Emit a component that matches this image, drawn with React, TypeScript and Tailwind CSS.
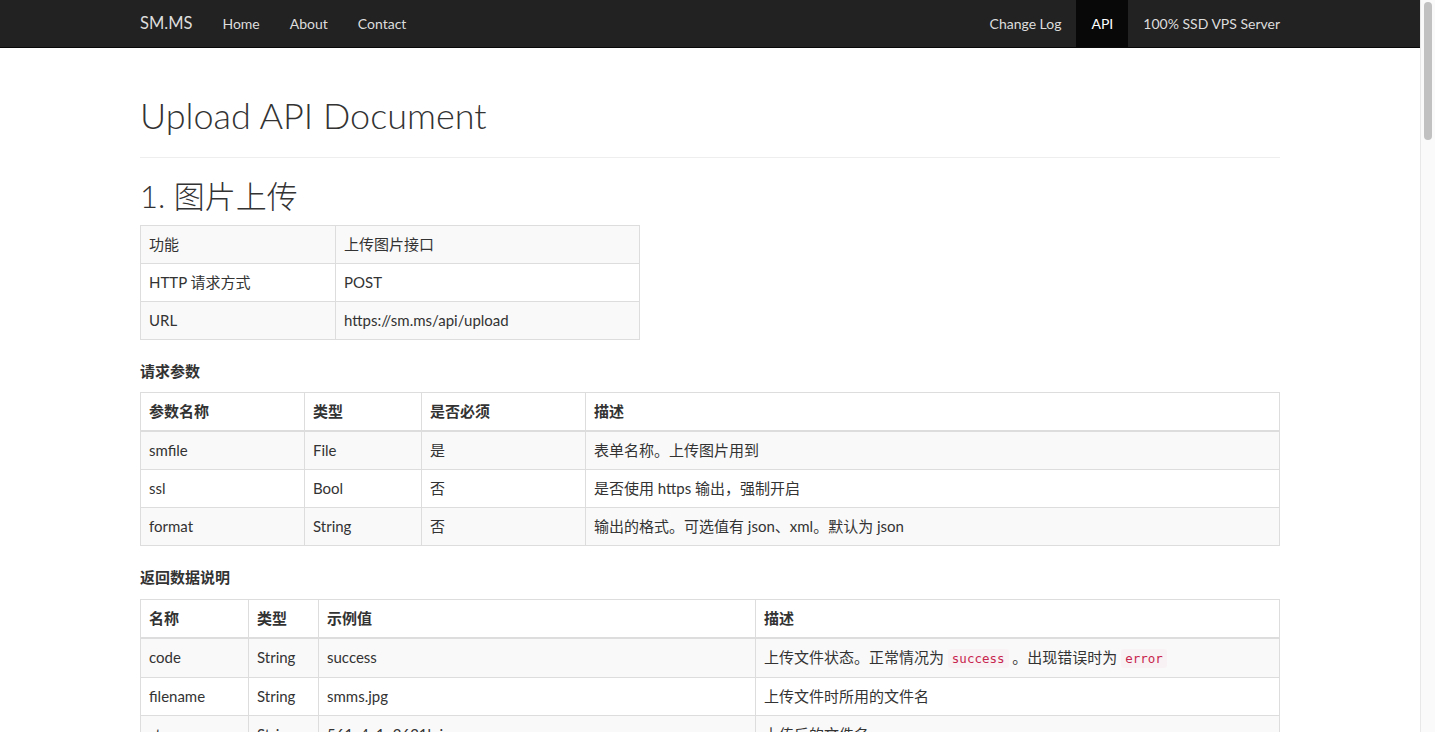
import React from 'react';

const font = { fontFamily: 'Lato, "Noto Sans CJK SC", sans-serif' };

function Code({ children }: { children: React.ReactNode }) {
  return (
    <code className="rounded-[3px] bg-[#f9f2f4] px-[4px] py-[2px] font-['DejaVu_Sans_Mono',monospace] text-[12.5px] text-[#c7254e]">
      {children}
    </code>
  );
}

type Row = React.ReactNode[];

function DocTable({ head, rows, widths, className = '' }: { head?: string[]; rows: Row[]; widths: string[]; className?: string }) {
  return (
    <table className={`border-collapse border border-[#ddd] text-[15px] leading-[21px] text-[#333] ${className}`}>
      {head && (
        <thead>
          <tr>
            {head.map((h, i) => (
              <th key={i} className={`border border-b-2 border-[#ddd] px-[8px] py-[8px] text-left font-bold ${widths[i]}`}>
                {h}
              </th>
            ))}
          </tr>
        </thead>
      )}
      <tbody>
        {rows.map((r, ri) => (
          <tr key={ri} className={ri % 2 === 0 ? 'bg-[#f9f9f9]' : 'bg-white'}>
            {r.map((c, ci) => (
              <td key={ci} className={`border border-[#ddd] px-[8px] py-[8px] align-top ${head ? '' : widths[ci]}`}>
                {c}
              </td>
            ))}
          </tr>
        ))}
      </tbody>
    </table>
  );
}

export default function App() {
  const leftNav = ['Home', 'About', 'Contact'];

  return (
    <div className="flex h-screen overflow-hidden bg-white text-[#333]" style={font}>
      <div className="min-w-0 flex-1 overflow-hidden">
        <header className="h-[48px] border-b border-[#080808] bg-[#222]">
          <div className="mx-auto flex h-full w-[1140px] items-stretch">
            <a className="flex items-center pr-[15px] text-[16.5px] text-[#ddd]">SM.MS</a>
            {leftNav.map((l) => (
              <a key={l} className="flex items-center px-[15px] text-[14px] text-[#ddd]">
                {l}
              </a>
            ))}
            <div className="ml-auto flex items-stretch">
              <a className="flex items-center px-[15px] text-[14px] text-[#ddd]">Change Log</a>
              <a className="flex items-center bg-[#080808] px-[15px] text-[14px] text-white">API</a>
              <a className="flex items-center pl-[15px] text-[14px] text-[#ddd]">100% SSD VPS Server</a>
            </div>
          </div>
        </header>

        <main className="mx-auto w-[1140px] pb-10">
          <h1 className="mt-[45px] border-b border-[#eee] pb-[20px] text-[36px] font-light leading-[44px]">Upload API Document</h1>
          <h2 className="mt-[20px] text-[31px] font-light leading-[36px]">1. 图片上传</h2>

          <DocTable
            className="mt-[11px] w-[500px]"
            widths={['w-[195px]', '']}
            rows={[
              ['功能', '上传图片接口'],
              ['HTTP 请求方式', 'POST'],
              ['URL', 'https://sm.ms/api/upload'],
            ]}
          />

          <h4 className="mt-[21px] text-[15px] font-bold leading-[21px]">请求参数</h4>
          <DocTable
            className="mt-[10px] w-full"
            widths={['w-[164px]', 'w-[117px]', 'w-[164px]', '']}
            head={['参数名称', '类型', '是否必须', '描述']}
            rows={[
              ['smfile', 'File', '是', '表单名称。上传图片用到'],
              ['ssl', 'Bool', '否', '是否使用 https 输出，强制开启'],
              ['format', 'String', '否', '输出的格式。可选值有 json、xml。默认为 json'],
            ]}
          />

          <h4 className="mt-[21px] text-[15px] font-bold leading-[21px]">返回数据说明</h4>
          <DocTable
            className="mt-[11px] w-full"
            widths={['w-[108px]', 'w-[70px]', 'w-[437px]', '']}
            head={['名称', '类型', '示例值', '描述']}
            rows={[
              [
                'code',
                'String',
                'success',
                <>
                  上传文件状态。正常情况为 <Code>success</Code> 。出现错误时为 <Code>error</Code>
                </>,
              ],
              ['filename', 'String', 'smms.jpg', '上传文件时所用的文件名'],
              ['storename', 'String', '561c4c1e2621b.jpg', '上传后的文件名'],
              ['size', 'Integer', '187851', '文件大小'],
              ['width', 'Integer', '1200', '图片的宽度'],
            ]}
          />
        </main>
      </div>

      {/* browser scrollbar */}
      <div className="w-[15px] shrink-0 border-l border-[#e8e8e8] bg-[#fafafa]">
        <div className="ml-[3px] mt-[2px] h-[138px] w-[8px] rounded-full bg-[#c1c1c1]" />
      </div>
    </div>
  );
}
